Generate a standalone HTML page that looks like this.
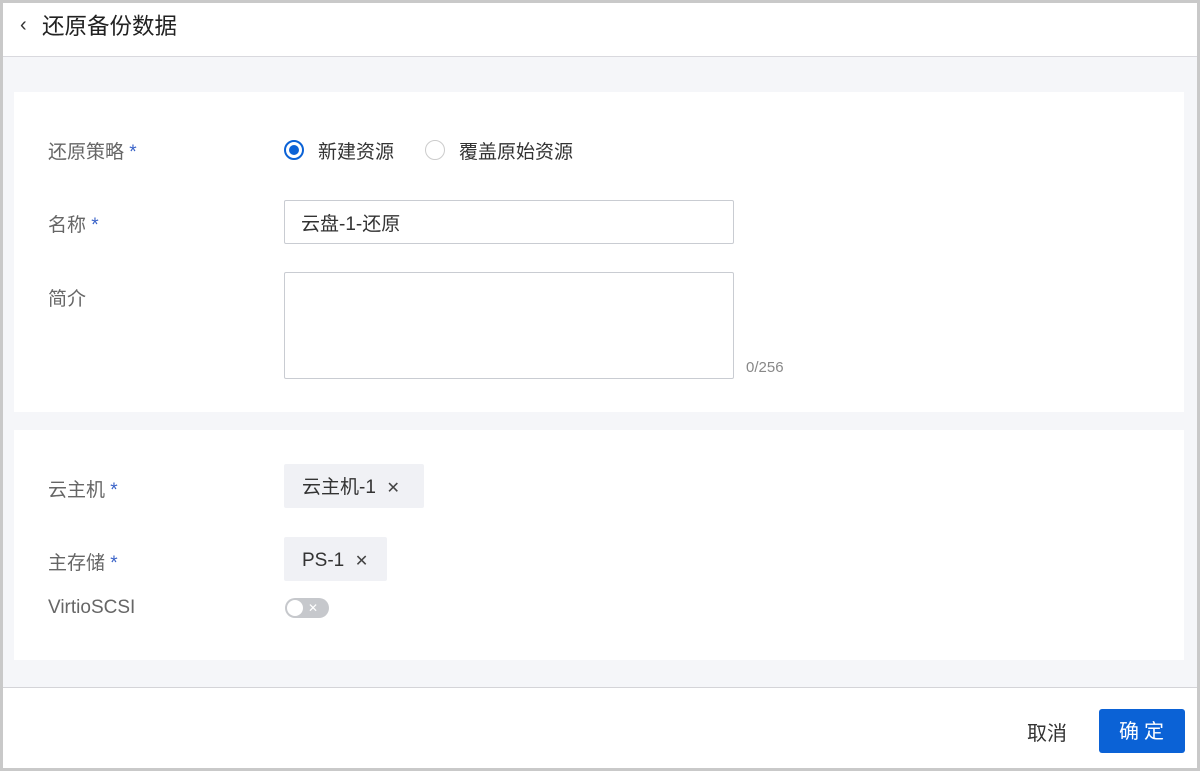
<!DOCTYPE html>
<html><head><meta charset="utf-8"><style>
*{box-sizing:border-box;margin:0;padding:0}
body{width:1200px;height:771px;background:#c9c9c9;font-family:"Liberation Sans","Noto Sans CJK SC",sans-serif;position:relative;overflow:hidden}
.frame{position:absolute;left:3px;top:3px;width:1194px;height:765px;background:#f5f6f9}
.hdr{position:absolute;left:0;top:0;width:100%;height:54px;background:#fff;border-bottom:1px solid #d9d9de}
.hdr .t{position:absolute;left:39px;top:10px;font-size:22.5px;line-height:28px;color:#222}
.hdr .b{position:absolute;left:17px;top:10px;font-size:20px;line-height:24px;color:#333}
.card{position:absolute;left:11px;width:1170px;background:#fff}
.lbl{position:absolute;left:34px;font-size:19px;line-height:22px;color:#666}
.lbl i{font-style:normal;color:#3a63c8}
.txt{font-size:19px;line-height:22px;color:#333;position:absolute}
.radio{position:absolute;width:20px;height:20px;border-radius:50%;border:1px solid #ccc;background:#fff}
.radio.on{border:2px solid #0b62d6}
.radio.on::after{content:"";position:absolute;left:3px;top:3px;width:10px;height:10px;border-radius:50%;background:#0b62d6}
.inp{position:absolute;left:270px;width:450px;border:1px solid #c9ccd2;border-radius:2px;background:#fff}
.tag{position:absolute;left:270px;height:44px;background:#f0f1f5;border-radius:2px;font-size:19px;line-height:44px;color:#333;padding:4px 0 0 18px;line-height:40px}
.tag span{font-size:16px;color:#444}
.ftr{position:absolute;left:0;top:684px;width:100%;height:81px;background:#fff;border-top:1px solid #d4d4d8}
.btn{position:absolute;left:1096px;top:21px;width:86px;height:44px;background:#0b62d6;border-radius:3px;color:#fff;font-size:20px;text-align:center;line-height:46px;letter-spacing:5px;padding-left:4px}
</style></head><body><div class="frame">
<div class="hdr"><span class="b">‹</span><span class="t">还原备份数据</span></div>
<div class="card" style="top:89px;height:320px">
 <div class="lbl" style="top:50px">还原策略 <i>*</i></div>
 <div class="radio on" style="left:270px;top:48px"></div><div class="txt" style="left:304px;top:50px">新建资源</div>
 <div class="radio" style="left:411px;top:48px"></div><div class="txt" style="left:445px;top:50px">覆盖原始资源</div>
 <div class="lbl" style="top:123px">名称 <i>*</i></div>
 <div class="inp" style="top:108px;height:44px"><span class="txt" style="left:16px;top:13px">云盘-1-还原</span></div>
 <div class="lbl" style="top:197px">简介</div>
 <div class="inp" style="top:180px;height:107px"></div>
 <div style="position:absolute;left:732px;top:267px;font-size:15px;color:#888">0/256</div>
</div>
<div class="card" style="top:427px;height:230px">
 <div class="lbl" style="top:50px">云主机 <i>*</i></div>
 <div class="tag" style="top:34px;width:140px">云主机-1 &nbsp;<span>✕</span></div>
 <div class="lbl" style="top:123px">主存储 <i>*</i></div>
 <div class="tag" style="top:107px;width:103px">PS-1 &nbsp;<span>✕</span></div>
 <div class="lbl" style="top:167px">VirtioSCSI</div>
 <div style="position:absolute;left:271px;top:168px;width:44px;height:20px;border-radius:10px;background:#c6c8cc"><div style="position:absolute;left:2px;top:2px;width:16px;height:16px;border-radius:50%;background:#fff"></div><span style="position:absolute;left:23px;top:2px;font-size:12px;line-height:16px;color:#fff">✕</span></div>
</div>
<div class="ftr"><div class="txt" style="left:1024px;top:35px;font-size:20px">取消</div><div class="btn">确定</div></div>
</div></body></html>
